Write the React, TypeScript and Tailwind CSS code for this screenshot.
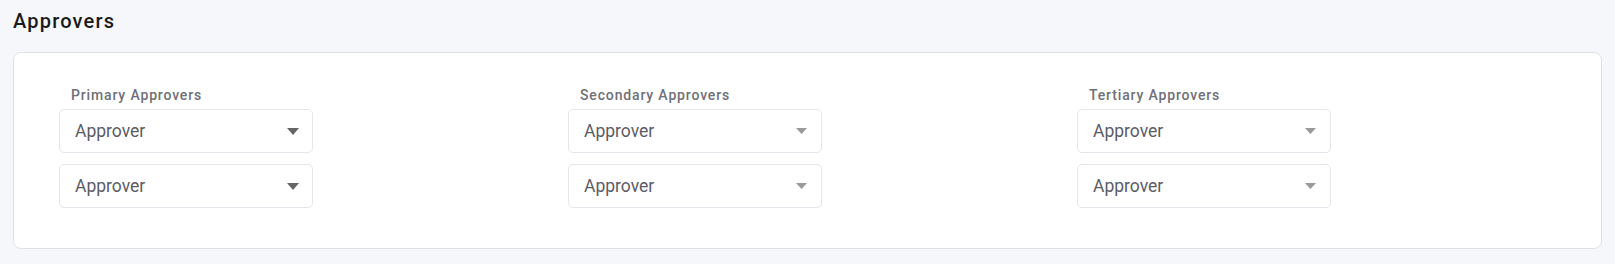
import React from 'react';

const columns = [
    { label: 'Primary Approvers', dark: true },
    { label: 'Secondary Approvers', dark: false },
    { label: 'Tertiary Approvers', dark: false },
];

const ApproverSelect: React.FC<{ dark: boolean }> = ({ dark }) => (
    <div className="flex h-[44px] w-[254px] items-center justify-between rounded-[5px] border border-[#e4e6ec] bg-white pl-[15px] pr-[13px]">
        <span className="text-[17.5px] text-[#5c5c66]">Approver</span>
        {dark ? (
            <svg width="12" height="7" viewBox="0 0 12 7">
                <path d="M0 0 H12 L6 7 Z" fill="#666666" />
            </svg>
        ) : (
            <svg width="11" height="6" viewBox="0 0 11 6" className="mr-[1px]">
                <path d="M0 0 H11 L5.5 6 Z" fill="#9a9a9a" />
            </svg>
        )}
    </div>
);

const App: React.FC = () => {
    return (
        <div className="min-h-[264px] w-full bg-[#f6f7fb] px-[13px] pt-[8px] font-['Roboto',sans-serif]">
            <h2 className="text-[20px] font-medium leading-[26px] tracking-[1.2px] text-[#1a1a1a]">Approvers</h2>
            <div className="mt-[18px] h-[197px] rounded-[8px] border border-[#dfe1e6] bg-white pl-[45px] pr-[15px] pt-[32px]">
                <div className="grid grid-cols-3">
                    {columns.map((col) => (
                        <div key={col.label} className="flex flex-col">
                            <span className="mb-[4px] pl-[12px] text-[14px] font-medium leading-[20px] tracking-[0.85px] text-[#707078]">
                                {col.label}
                            </span>
                            <div className="flex flex-col gap-[11px]">
                                <ApproverSelect dark={col.dark} />
                                <ApproverSelect dark={col.dark} />
                            </div>
                        </div>
                    ))}
                </div>
            </div>
        </div>
    );
};

export default App;
